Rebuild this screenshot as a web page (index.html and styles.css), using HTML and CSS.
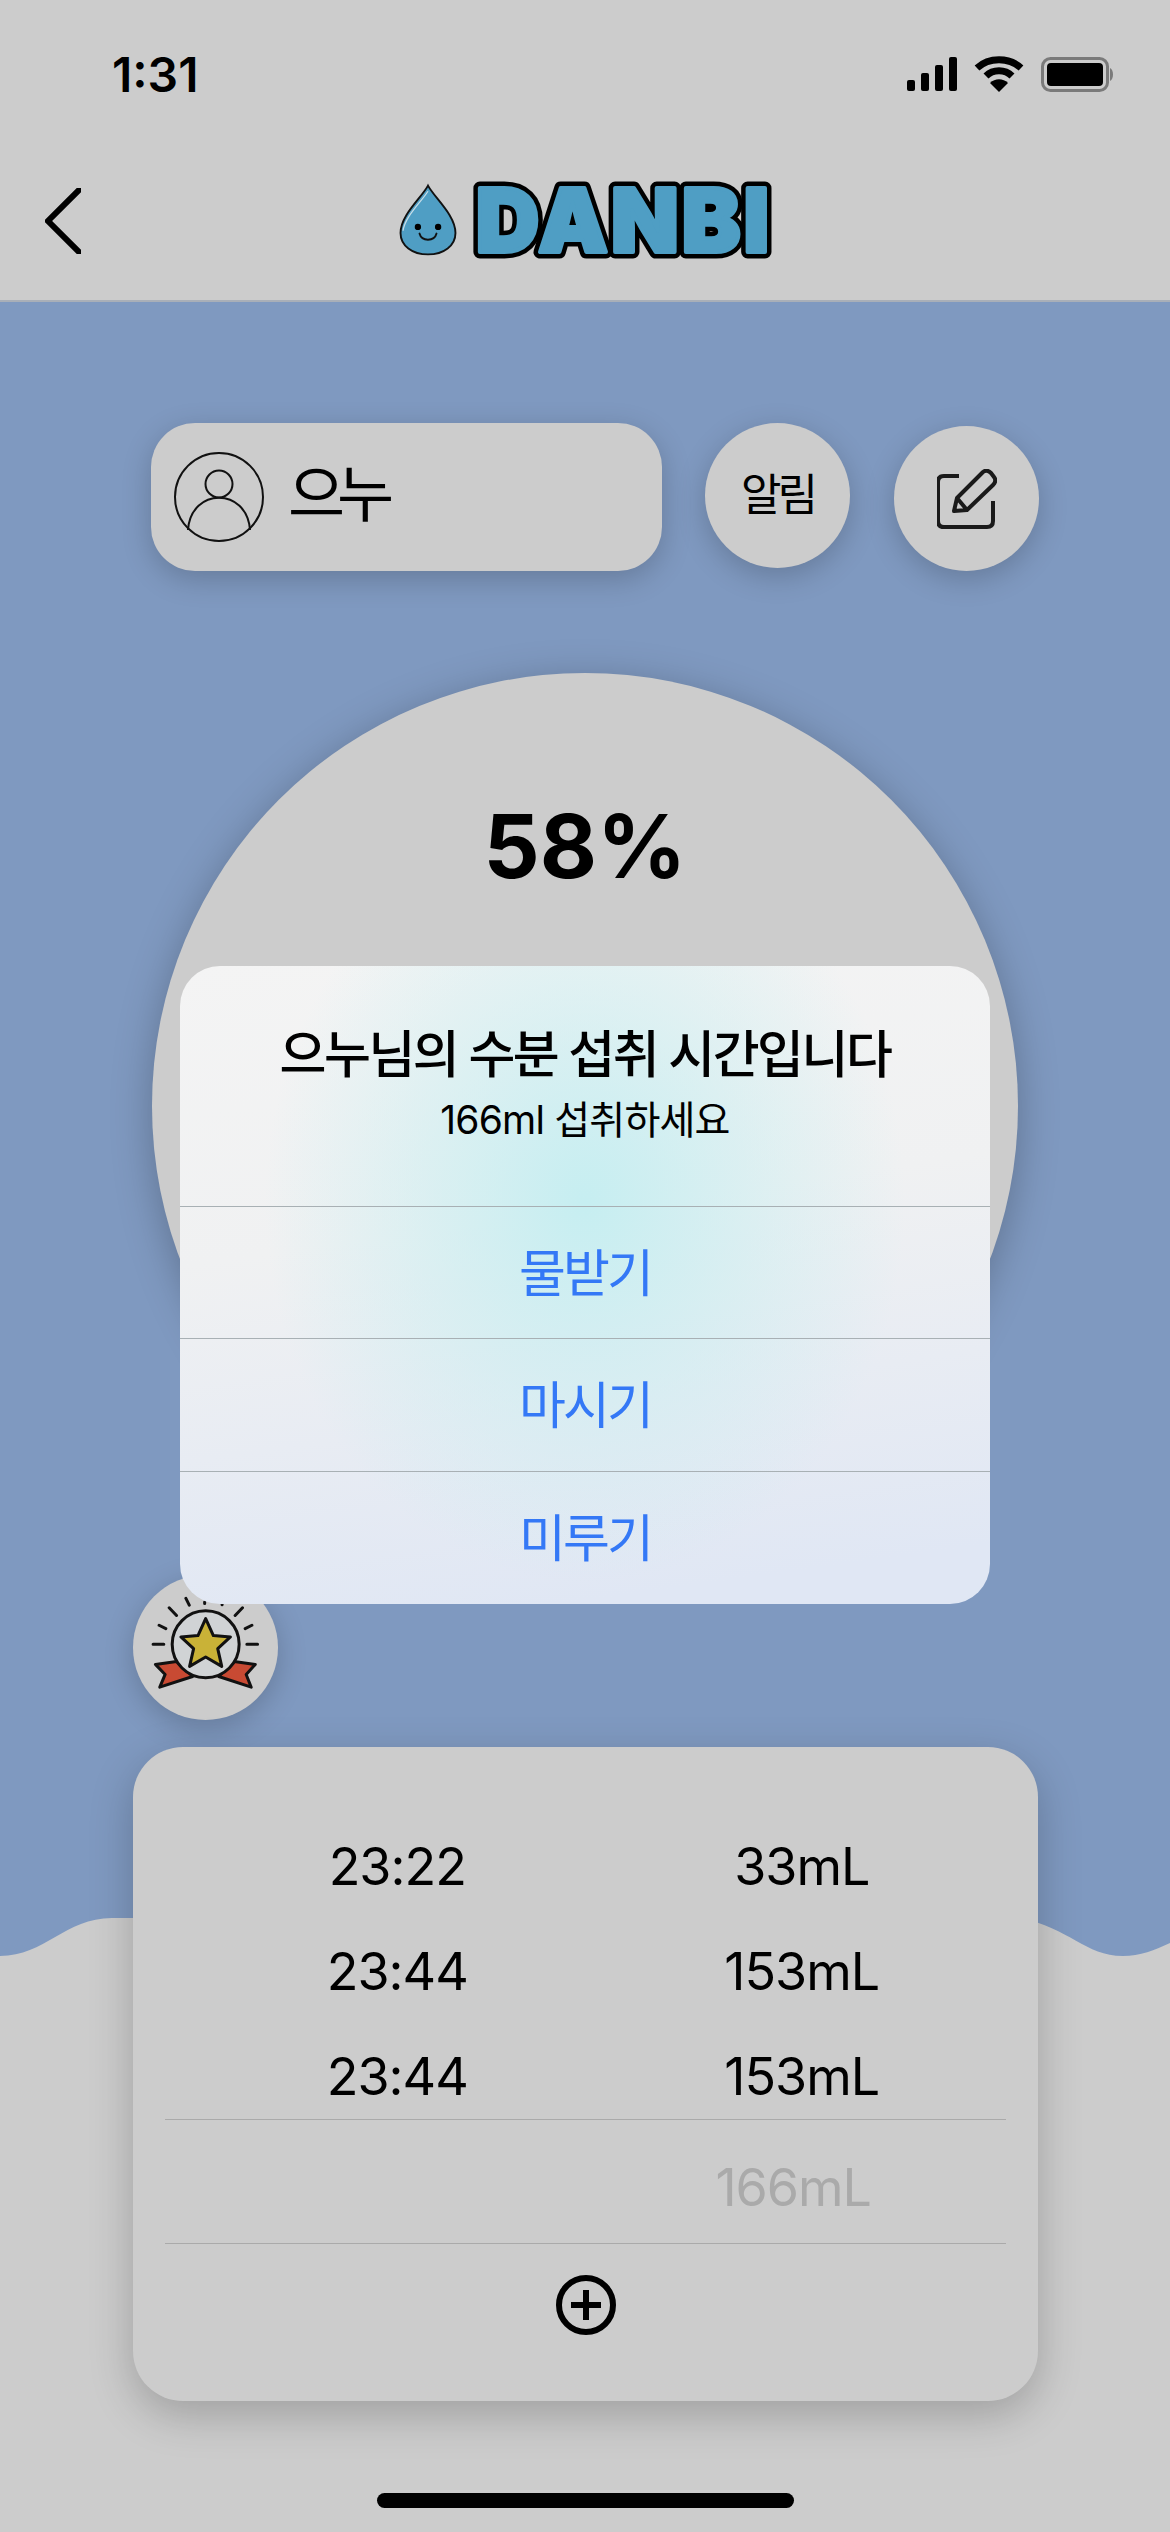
FILE: index.html
```html
<!DOCTYPE html>
<html lang="ko">
<head>
    <meta charset="UTF-8">
    <meta name="viewport" content="width=device-width, initial-scale=1.0">
    <title>DANBI</title>
    <link rel="stylesheet" href="styles.css">
</head>
<body>
    <div class="phone">
        <header class="top">
            <div class="status">
                <span class="clock">1:31</span>
                <div class="status-icons">
                    <svg class="ic-signal" viewBox="0 0 50 34"><rect x="0" y="23" width="8" height="11" rx="2"/><rect x="14" y="16" width="8" height="18" rx="2"/><rect x="28" y="8" width="8" height="26" rx="2"/><rect x="42" y="0" width="8" height="34" rx="2"/></svg>
                    <svg class="ic-wifi" viewBox="0 0 50 36"><path class="wifi-arc" d="M3 12 C15 1 35 1 47 12"/><path class="wifi-arc" d="M12 20 C19 13 31 13 38 20"/><path d="M25 36 L16 27 C21 22 29 22 34 27 Z"/></svg>
                    <svg class="ic-battery" viewBox="0 0 73 35"><rect class="batt-shell" x="1.5" y="1.5" width="65" height="32" rx="8"/><rect x="6" y="6" width="56" height="23" rx="4"/><path class="batt-cap" d="M69 11 C73 13 73 22 69 24 Z"/></svg>
                </div>
            </div>
            <nav class="nav">
                <svg class="back" viewBox="0 0 36 66"><path d="M34 2 L3 33 L34 64"/></svg>
                <div class="logo">
                    <svg class="drop" viewBox="50 65 190 232">
                        <path class="drop-body" d="M145 72 C125 110 58 165 58 222 C58 262 95 290 145 290 C195 290 232 262 232 222 C232 165 165 110 145 72 Z"/>
                        <path class="drop-shine" d="M145 90 C125 122 72 170 66 215"/>
                        <circle cx="113" cy="203" r="10"/>
                        <circle cx="177" cy="203" r="10"/>
                        <path class="drop-smile" d="M118 224 C125 250 165 250 172 224"/>
                    </svg>
                    <svg class="wordmark" viewBox="0 0 300 74">
                        <g class="wordmark-line">
                            <text id="wordmark-text" x="150" y="69">DANBI</text>
                        </g>
                        <use class="wordmark-fill" href="#wordmark-text"/>
                    </svg>
                </div>
            </nav>
        </header>

        <svg class="wave" viewBox="0 0 1170 632"><path d="M0 56 C45 56 65 18 112 18 C400 18 800 18 1020 18 C1070 28 1085 56 1123 56 C1140 56 1155 50 1170 43 V632 H0 Z"/></svg>

        <main class="content">
            <div class="profile-row">
                <div class="profile">
                    <svg class="avatar" viewBox="0 0 90 90">
                        <circle cx="45" cy="45" r="44"/>
                        <circle cx="45" cy="32" r="13.500"/>
                        <path d="M14 78 C17 35 73 35 76 78"/>
                    </svg>
                    <span class="name">으누</span>
                </div>
                <button class="round-btn alarm">알림</button>
                <button class="round-btn edit">
                    <svg class="edit-icon" viewBox="0 0 60 60">
                        <path class="edit-box" d="M22 7 H7 Q1 7 1 13 V52 Q1 58 7 58 H50 Q56 58 56 52 V32"/>
                        <path class="edit-pen" d="M17 42 L20 29 L46 3 Q50 0 54 4 L57 8 Q60 12 56 16 L30 41 Z M20 29 L30 41"/>
                    </svg>
                </button>
            </div>

            <section class="gauge">
                <div class="percent">58%</div>
            </section>

            <button class="medal">
                <svg viewBox="40 105 433 433">
                    <g class="medal-rays">
                        <path d="M100 312H132M118 255L138 265M148 203L170 226M198 175L208 195M254 186V190M306 190V194M345 226L367 203M375 265L395 255M380 312H412"/>
                    </g>
                    <path class="ribbon" d="M107 372L170 363L218 408L120 440L136 402Z"/>
                    <path class="ribbon" d="M405 372L342 363L296 408L393 440L378 402Z"/>
                    <circle class="medal-disc" cx="257" cy="312" r="100"/>
                    <path class="medal-star" d="M257 235L280 286L331 290L293 325L305 378L257 350L209 378L221 325L183 290L234 286Z"/>
                </svg>
            </button>

            <section class="log">
                <div class="log-row"><span>23:22</span><span>33mL</span></div>
                <div class="log-row"><span>23:44</span><span>153mL</span></div>
                <div class="log-row"><span>23:44</span><span>153mL</span></div>
                <div class="log-next"><span>166mL</span></div>
                <div class="log-add">
                    <svg viewBox="0 0 60 60"><circle cx="30" cy="30" r="27"/><path d="M30 15V45M15 30H45"/></svg>
                </div>
            </section>
        </main>

        <div class="dialog">
            <div class="dialog-text">
                <h2>으누님의 수분 섭취 시간입니다</h2>
                <p>166ml 섭취하세요</p>
            </div>
            <button>물받기</button>
            <button>마시기</button>
            <button>미루기</button>
        </div>

        <div class="home-bar"></div>
    </div>
</body>
</html>
```

FILE: styles.css
```css
body {
    margin: 0;
    font-family: Inter, "Noto Sans CJK KR", sans-serif;
    color: #000;
}

button {
    font: inherit;
    color: inherit;
    border: none;
    padding: 0;
}

.phone {
    position: relative;
    width: 1170px;
    height: 2532px;
    overflow: hidden;
    background-color: #7f99c0;
}

/* top bar */
.top {
    height: 300px;
    background-color: #ccc;
    border-bottom: 2px solid #a9afb8;
}

.status {
    height: 148px;
    display: flex;
    align-items: center;
    justify-content: space-between;
    padding: 0 56px 0 112px;
}

.clock {
    font-size: 48px;
    font-weight: 600;
}

.status-icons {
    display: flex;
    align-items: center;
    gap: 17px;
}

.ic-signal { width: 50px; height: 34px; }
.ic-wifi { width: 50px; height: 36px; }
.ic-battery { width: 73px; height: 35px; }

.wifi-arc {
    fill: none;
    stroke: #000;
    stroke-width: 7;
}

.batt-shell {
    fill: none;
    stroke: #7a7a7a;
    stroke-width: 3;
}

.batt-cap {
    fill: #7a7a7a;
}

.nav {
    position: relative;
    height: 152px;
    display: flex;
    align-items: flex-start;
    justify-content: center;
}

.back {
    position: absolute;
    left: 45px;
    top: 40px;
    width: 36px;
    height: 66px;
    fill: none;
    stroke: #000;
    stroke-width: 6;
    stroke-linecap: round;
}

.logo {
    display: flex;
    align-items: center;
    gap: 16px;
    margin-top: 35px;
    margin-left: 1px;
}

.drop {
    width: 60px;
    height: 74px;
}

.drop-body {
    fill: #4f9ec4;
    stroke: #111;
    stroke-width: 6;
}

.drop-shine {
    fill: none;
    stroke: #c6dde8;
    stroke-width: 4;
}

.drop-smile {
    fill: none;
    stroke: #111;
    stroke-width: 6;
    stroke-linecap: round;
}

.wordmark {
    width: 300px;
    height: 74px;
    overflow: visible;
}

.wordmark text {
    font-family: Inter, sans-serif;
    font-size: 88px;
    font-weight: 900;
    letter-spacing: 3px;
    text-anchor: middle;
    stroke-linejoin: round;
}

.wordmark-line {
    fill: #000;
    stroke: #000;
    stroke-width: 13px;
}

.wordmark-fill {
    fill: #4f9ec4;
    stroke: #4f9ec4;
    stroke-width: 4px;
}

/* water level behind the cards */
.wave {
    position: absolute;
    left: 0;
    bottom: 0;
    width: 1170px;
    height: 632px;
    fill: #ccc;
}

.content {
    position: relative;
    display: flex;
    flex-direction: column;
    padding-left: 133px;
}

.profile-row {
    display: flex;
    align-items: flex-start;
    margin-top: 121px;
    margin-left: 18px;
}

.profile {
    width: 511px;
    height: 148px;
    display: flex;
    align-items: center;
    gap: 24px;
    padding-left: 23px;
    box-sizing: border-box;
    background-color: #ccc;
    border-radius: 44px;
    box-shadow: 0 8px 30px rgba(0, 0, 0, 0.2);
}

.avatar {
    width: 90px;
    height: 90px;
    fill: none;
    stroke: #111;
    stroke-width: 2;
}

.name {
    font-size: 62px;
    letter-spacing: -8px;
    margin-bottom: 14px;
}

.round-btn {
    width: 145px;
    height: 145px;
    border-radius: 50%;
    background-color: #ccc;
    box-shadow: 0 8px 30px rgba(0, 0, 0, 0.2);
}

.alarm {
    margin-left: 43px;
    padding-bottom: 8px;
    font-size: 44px;
    letter-spacing: -4px;
}

.edit {
    margin-left: 44px;
    margin-top: 3px;
    display: flex;
    align-items: center;
    justify-content: center;
}

.edit-icon {
    width: 60px;
    height: 60px;
    fill: none;
    stroke: #1a1a1a;
    stroke-width: 4;
    stroke-linejoin: round;
}

.gauge {
    width: 866px;
    height: 866px;
    margin-top: 102px;
    margin-left: 19px;
    border-radius: 50%;
    background-color: #ccc;
    box-shadow: 0 8px 40px rgba(0, 0, 0, 0.25);
}

.percent {
    margin-top: 112px;
    font-size: 88px;
    font-weight: 700;
    line-height: 122px;
    text-align: center;
}

.medal {
    width: 145px;
    height: 145px;
    margin-top: 36px;
    border-radius: 50%;
    background-color: #ccc;
    box-shadow: 0 8px 30px rgba(0, 0, 0, 0.2);
}

.medal svg {
    display: block;
    width: 145px;
    height: 145px;
    fill: none;
    stroke: #111;
    stroke-width: 9;
    stroke-linecap: round;
    stroke-linejoin: round;
}

.ribbon { fill: #c84a33; }
.medal-disc { fill: #d0d3d5; }
.medal-star { fill: #c9b237; }

.log {
    width: 905px;
    height: 654px;
    margin-top: 27px;
    padding-top: 67px;
    box-sizing: border-box;
    background-color: #ccc;
    border-radius: 50px;
    box-shadow: 0 14px 44px rgba(0, 0, 0, 0.22);
    font-size: 52px;
    letter-spacing: -1px;
}

.log-row {
    display: grid;
    grid-template-columns: 1fr 1fr;
    height: 105px;
    line-height: 105px;
    margin: 0 32px;
}

.log-row span {
    text-align: center;
}

.log-row span:first-child {
    margin-left: 44px;
}

.log-row span:last-child {
    margin-left: 12px;
}

.log-next {
    margin: -10px 32px 0;
    height: 125px;
    line-height: 125px;
    box-sizing: border-box;
    border-top: 1px solid #aaa;
    border-bottom: 1px solid #aaa;
    padding-top: 5px;
    color: #aaa;
    text-align: right;
    padding-right: 135px;
}

.log-add {
    display: flex;
    justify-content: center;
    padding-top: 31px;
}

.log-add svg {
    width: 60px;
    height: 60px;
    fill: none;
    stroke: #000;
    stroke-width: 6;
}

/* alert over everything */
.dialog {
    position: absolute;
    left: 180px;
    top: 966px;
    width: 810px;
    height: 638px;
    display: flex;
    flex-direction: column;
    overflow: hidden;
    border-radius: 40px;
    background:
        radial-gradient(ellipse 320px 380px at 50% 37%, #c6eef1 0%, rgba(198, 238, 241, 0) 100%),
        linear-gradient(172deg, #f4f4f4 0%, #f0f1f2 40%, #e0e7f4 92%);
}

.dialog-text {
    height: 240px;
    box-sizing: border-box;
    padding-top: 55px;
    text-align: center;
}

.dialog-text h2 {
    margin: 0;
    font-size: 51px;
    font-weight: 500;
    line-height: 68px;
    letter-spacing: -2.500px;
}

.dialog-text p {
    margin: 0;
    font-size: 39px;
    line-height: 62px;
    letter-spacing: -0.800px;
}

.dialog button {
    height: 133px;
    box-sizing: border-box;
    padding-bottom: 6px;
    border-top: 1px solid #a8b0b4;
    background: none;
    color: #3478f6;
    font-size: 51px;
    letter-spacing: -3px;
}

.home-bar {
    position: absolute;
    left: 377px;
    bottom: 24px;
    width: 417px;
    height: 15px;
    border-radius: 8px;
    background-color: #000;
}
```
